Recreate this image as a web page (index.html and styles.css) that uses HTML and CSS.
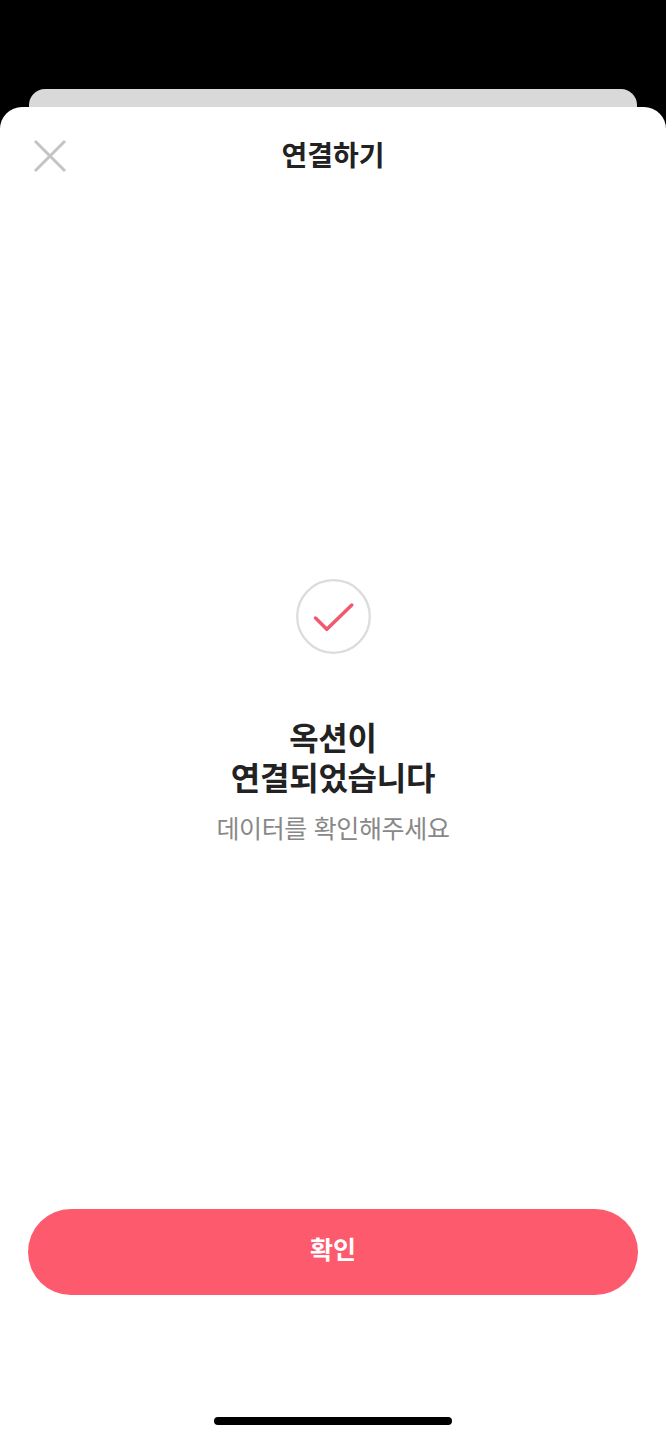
FILE: index.html
```html
<!DOCTYPE html>
<html lang="ko">
<head>
<meta charset="utf-8">
<title>연결하기</title>
<link rel="stylesheet" href="styles.css">
</head>
<body>
<div class="back-card"></div>
<main class="sheet">
  <header class="header">
    <svg class="close" viewBox="0 0 34 34" aria-hidden="true"><path d="M2 2L32 32M32 2L2 32"/></svg>
    <h1 class="title">연결하기</h1>
  </header>
  <section class="result">
    <svg class="check" viewBox="0 0 75 75" aria-hidden="true">
      <circle class="check-ring" cx="37.500" cy="37.500" r="36.300"/>
      <path class="check-mark" d="M19.500 39L30.800 50.300L55.800 26"/>
    </svg>
    <h2 class="headline">옥션이<br>연결되었습니다</h2>
    <p class="sub">데이터를 확인해주세요</p>
  </section>
  <button class="confirm" type="button">확인</button>
  <div class="home-bar"></div>
</main>
</body>
</html>
```

FILE: styles.css
```css
* { box-sizing: border-box; }
html, body { margin: 0; padding: 0; }
body {
  width: 666px;
  height: 1440px;
  overflow: hidden;
  background: #000;
  padding-top: 89px;
  font-family: "Noto Sans CJK KR", "Noto Sans", sans-serif;
}
.back-card {
  height: 18px;
  margin: 0 29px;
  background: #d9d9d9;
  border-radius: 16px 16px 0 0;
}
.sheet {
  height: 1333px;
  background: #fff;
  border-radius: 22px 22px 0 0;
  display: flex;
  flex-direction: column;
  align-items: center;
}
.header {
  width: 100%;
  height: 98px;
  padding: 32px 0 0 33px;
  display: grid;
  grid-template-columns: 34px 1fr 34px;
  column-gap: 0;
}
.close { width: 34px; height: 34px; }
.close path { fill: none; stroke: #c4c4c4; stroke-width: 3; }
.title {
  margin: -1px 33px 0 0;
  text-align: center;
  font-size: 28px;
  line-height: 32px;
  font-weight: 700;
  color: #222;
}
.result {
  margin-top: 374px;
  display: flex;
  flex-direction: column;
  align-items: center;
  height: 630px;
}
.check { width: 75px; height: 75px; flex: none; }
.check-ring { fill: #fff; stroke: #dcdcdc; stroke-width: 2.300; }
.check-mark { fill: none; stroke: #f0596e; stroke-width: 3.500; stroke-linecap: round; stroke-linejoin: round; }
.headline {
  margin: 62px 0 0;
  text-align: center;
  font-size: 32px;
  line-height: 40px;
  font-weight: 700;
  letter-spacing: -0.2px;
  color: #222;
}
.sub {
  margin: 13px 0 0;
  font-size: 25px;
  line-height: 36px;
  font-weight: 400;
  letter-spacing: -0.35px;
  color: #888;
}
.confirm {
  width: 610px;
  height: 86px;
  padding: 0 0 8px;
  border: 0;
  border-radius: 43px;
  background: #fd5a6e;
  color: #fff;
  font-family: inherit;
  font-size: 25px;
  font-weight: 700;
}
.home-bar {
  width: 238px;
  height: 8px;
  margin-top: 122px;
  border-radius: 4px;
  background: #000;
}
```
